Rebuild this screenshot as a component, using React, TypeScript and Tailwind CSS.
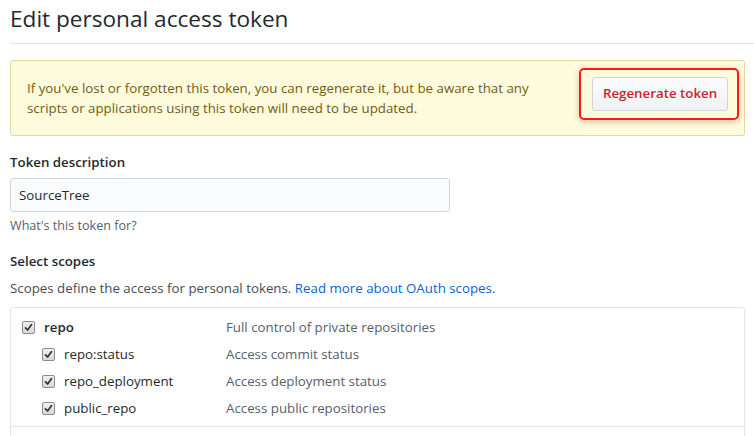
import React from 'react';

const Check: React.FC<{ indent?: boolean }> = ({ indent }) => (
  <span
    className={`flex h-[13px] w-[13px] shrink-0 items-center justify-center rounded-[2px] border border-[#8c8c8c] bg-gradient-to-b from-[#f0f0f0] to-[#d8d8d8] ${indent ? 'ml-[31px]' : 'ml-[11px]'}`}
  >
    <svg width="9" height="9" viewBox="0 0 9 9">
      <path d="M1.5 4.8 L3.6 7 L7.6 1.6" fill="none" stroke="#333" strokeWidth="1.7" strokeLinecap="round" strokeLinejoin="round" />
    </svg>
  </span>
);

const scopes = [
  { name: 'repo', desc: 'Full control of private repositories', top: true },
  { name: 'repo:status', desc: 'Access commit status' },
  { name: 'repo_deployment', desc: 'Access deployment status' },
  { name: 'public_repo', desc: 'Access public repositories' },
];

const App: React.FC = () => {
  return (
    <div className="min-h-screen bg-white pl-[10px] font-['Open_Sans',sans-serif] text-[13.3px] text-[#24292e]">
      <h2 className="border-b border-[#e1e4e8] pt-[3px] pb-[9px] text-[22.6px] leading-[31px] font-normal">
        Edit personal access token
      </h2>

      <div className="mr-[9px]">
        <div className="mt-[16px] flex items-start justify-between rounded-[3px] border border-[#e2d7a4] bg-[#fffbdd] px-4 pt-[16px] pb-[17px] text-[#735c0f]">
          <p className="mt-[1px] leading-[20px]">
            If you've lost or forgotten this token, you can regenerate it, but be aware that any
            <br />
            scripts or applications using this token will need to be updated.
          </p>
          <div className="relative">
            <span className="absolute -top-[9px] -bottom-[9px] -left-[13px] -right-[11px] rounded-[5px] border-2 border-[#ff1a1a] shadow-[0_2px_6px_rgba(120,100,30,0.35)]" />
            <button className="relative h-[34px] w-[136px] rounded-[3px] border border-[#d1d5da] bg-gradient-to-b from-[#fafbfc] to-[#eff3f6] text-[13.3px] font-semibold text-[#cb2431]">
              Regenerate token
            </button>
          </div>
        </div>

        <div className="mt-[16px] leading-[20px] font-semibold">Token description</div>
        <input
          readOnly
          value="SourceTree"
          className="mt-[6px] block h-[34px] w-[440px] rounded-[3px] border border-[#d1d5da] bg-[#fafbfc] px-[8px] text-[13.3px] text-[#24292e] outline-none"
        />
        <p className="mt-[5px] text-[12.6px] leading-[18px] text-[#586069]">What's this token for?</p>

        <div className="mt-[16px] leading-[20px] font-semibold">Select scopes</div>
        <p className="mt-[7px] leading-[20px] text-[#444d56]">
          Scopes define the access for personal tokens.{' '}
          <a className="text-[#0366d6]">Read more about OAuth scopes</a>.
        </p>

        <div className="mt-[9px] rounded-[3px] border border-[#e1e4e8]">
          <div className="pt-[6px] pb-[4px]">
            {scopes.map((s) => (
              <div key={s.name} className="flex h-[27px] items-center">
                <Check indent={!s.top} />
                <span className={`ml-[9px] ${s.top ? 'w-[182px] font-semibold' : 'w-[162px]'}`}>{s.name}</span>
                <span className="text-[#586069]">{s.desc}</span>
              </div>
            ))}
          </div>
          <div className="h-[40px] border-t border-[#e1e4e8]" />
        </div>
      </div>
    </div>
  );
};

export default App;
